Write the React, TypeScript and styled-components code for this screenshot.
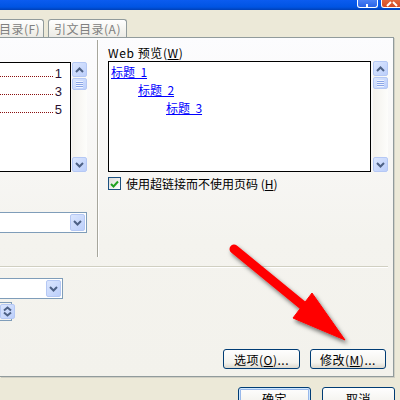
import React from 'react';
import styled, { createGlobalStyle } from 'styled-components';

const GlobalStyle = createGlobalStyle`
  body {
    margin: 0;
    font-family: "Noto Sans CJK SC", "Liberation Sans", sans-serif;
    font-size: 12px;
    color: #000;
  }
  * { box-sizing: border-box; }
`;

const Screen = styled.div`
  position: relative;
  width: 400px;
  height: 400px;
  overflow: hidden;
  background: #ece9d8;
  display: flex;
  flex-direction: column;
`;

const TitleBar = styled.div`
  height: 10px;
  flex-shrink: 0;
  background: linear-gradient(#0b5cf0, #0054e3 70%, #0041b8);
  display: flex;
  justify-content: flex-end;
  align-items: flex-start;
  gap: 3px;
`;

const CaptionButton = styled.div<{ $close?: boolean }>`
  width: 21px;
  height: 8px;
  margin-right: ${(p) => (p.$close ? '-2px' : '0')};
  border: 1px solid #fff;
  border-top: none;
  border-radius: 0 0 3px 3px;
  background: ${(p) => (p.$close ? 'linear-gradient(#e2673d, #d44a23)' : 'linear-gradient(#4b82f6, #2a63e6)')};
  display: flex;
  justify-content: center;
  align-items: flex-end;
`;

const TabRow = styled.div`
  display: flex;
  align-items: flex-end;
  gap: 4px;
  height: 18px;
  margin-top: 9px;
  flex-shrink: 0;
`;

const Tab = styled.div<{ $w: number; $shift?: number }>`
  width: ${(p) => p.$w}px;
  margin-left: ${(p) => p.$shift ?? 0}px;
  height: 18px;
  border: 1px solid #919b9c;
  border-bottom: none;
  border-radius: 3px 3px 0 0;
  background: linear-gradient(#fefefe, #f4f3ee 60%, #ecebe6);
  color: #808080;
  display: flex;
  align-items: center;
  justify-content: center;
  line-height: 1;
  white-space: nowrap;
  letter-spacing: 0.5px;
`;

const Panel = styled.div`
  width: 394px;
  height: 340px;
  flex-shrink: 0;
  border: 1px solid #919b9c;
  border-left: none;
  background: linear-gradient(#fcfcfe, #f4f3ee 60%, #f3f2ec);
  box-shadow: 1px 1px 0 #d0cfc4;
  display: flex;
  flex-direction: column;
`;

const TopSection = styled.div`
  height: 228px;
  display: flex;
`;

const LeftCol = styled.div`
  width: 97px;
  padding-top: 24px;
  display: flex;
  flex-direction: column;
`;

const ListFrame = styled.div`
  display: flex;
  gap: 1px;
  height: 110px;
`;

const ListBox = styled.div<{ $w: number }>`
  width: ${(p) => p.$w}px;
  height: 100%;
  background: #fff;
  border: 1px solid #000;
  padding-top: 1px;
`;

const LeftListBox = styled(ListBox)`
  border-left: none;
  padding-right: 8px;
`;

const LeaderRow = styled.div`
  height: 18px;
  display: flex;
  align-items: center;
  gap: 2px;
`;

const Leader = styled.span`
  flex: 1;
  height: 7px;
  border-bottom: 1px dotted #8a1010;
`;

const PageNum = styled.span`
  font-family: "Liberation Sans", sans-serif;
  font-size: 13px;
  color: #2a1030;
`;

const Scrollbar = styled.div`
  width: 15px;
  height: 100%;
  background: linear-gradient(90deg, #f3f1ec, #fdfdfb);
  display: flex;
  flex-direction: column;
  gap: 1px;
`;

const ScrollTrack = styled.div`
  flex: 1;
`;

const BlueButton = styled.div<{ $h?: number }>`
  width: 15px;
  height: ${(p) => p.$h ?? 15}px;
  border: 1px solid #b5c8f4;
  border-radius: 2px;
  background: linear-gradient(135deg, #dbe6fe, #bccffb);
  display: flex;
  align-items: center;
  justify-content: center;
  flex-shrink: 0;
`;

const Combo = styled.div<{ $w: number }>`
  width: ${(p) => p.$w}px;
  height: 21px;
  background: #fff;
  border: 1px solid #7f9db9;
  border-left: none;
  display: flex;
  justify-content: flex-end;
  align-items: center;
  padding-right: 1px;
`;

const LeftCombo = styled(Combo)`
  margin-top: 40px;
`;

const VSep = styled.div`
  width: 2px;
  height: 217px;
  margin-top: 2px;
  border-left: 1px solid #a7a69c;
  border-right: 1px solid #fff;
`;

const RightCol = styled.div`
  padding-left: 9px;
  display: flex;
  flex-direction: column;
`;

const Label = styled.div`
  margin-top: 7px;
  height: 15px;
  line-height: 15px;
  white-space: pre;
  letter-spacing: 0.6px;
`;

const PreviewFrame = styled.div`
  margin-top: 1px;
  display: flex;
  gap: 2px;
  height: 111px;
`;

const PreviewLink = styled.a<{ $indent: number }>`
  display: block;
  width: fit-content;
  height: 18px;
  line-height: 18px;
  margin-left: ${(p) => p.$indent}px;
  color: #0000ff;
  text-decoration: underline;
  white-space: pre;
`;

const CheckRow = styled.div`
  margin-top: 5px;
  display: flex;
  align-items: center;
  gap: 5px;
  height: 13px;
  white-space: nowrap;
`;

const CheckBox = styled.div`
  width: 13px;
  height: 13px;
  border: 1px solid #1c5180;
  background: linear-gradient(135deg, #dcdcd7, #fff);
  display: flex;
  align-items: center;
  justify-content: center;
`;

const HSep = styled.div`
  width: 388px;
  height: 2px;
  border-top: 1px solid #d0cfc1;
  border-bottom: 1px solid #fff;
`;

const BottomSection = styled.div`
  flex: 1;
  padding-top: 10px;
  display: flex;
  flex-direction: column;
`;

const Spinner = styled.div`
  width: 12px;
  height: 19px;
  margin-top: 3px;
  border: 1px solid #7f9db9;
  border-left: none;
  padding: 1px 1px 1px 0;
  display: flex;
`;

const ButtonRow = styled.div<{ $gap: number; $pr: number }>`
  display: flex;
  justify-content: flex-end;
  gap: ${(p) => p.$gap}px;
  padding-right: ${(p) => p.$pr}px;
`;

const PanelButtons = styled(ButtonRow)`
  margin-top: auto;
  margin-bottom: 7px;
`;

const FooterButtons = styled(ButtonRow)`
  margin-top: 10px;
`;

const XPButton = styled.div<{ $w: number; $default?: boolean }>`
  width: ${(p) => p.$w}px;
  height: ${(p) => (p.$default !== undefined ? 22 : 20)}px;
  border: 1px solid #003c74;
  border-radius: 3px;
  background: linear-gradient(#fefefe, #f4f3ee 70%, #dcd8ce);
  box-shadow: ${(p) => (p.$default ? 'inset 0 0 0 1px #cee7ff, inset 0 0 0 2px #98b8ea' : 'none')};
  display: flex;
  align-items: center;
  justify-content: center;
  white-space: nowrap;
  letter-spacing: 0.5px;
`;

const ArrowLayer = styled.svg`
  position: absolute;
  left: 0;
  top: 0;
  pointer-events: none;
`;

const Chevron = ({ up }: { up?: boolean }) => (
  <svg width="9" height="6" viewBox="0 0 9 6">
    <polyline
      points={up ? '1,5 4.5,1.5 8,5' : '1,1 4.5,4.5 8,1'}
      fill="none"
      stroke="#4d6185"
      strokeWidth="2"
    />
  </svg>
);

const Grip = () => (
  <svg width="7" height="7" viewBox="0 0 7 7">
    <g stroke="#eef3fe" strokeWidth="1">
      <line x1="0" y1="0.5" x2="7" y2="0.5" />
      <line x1="0" y1="2.5" x2="7" y2="2.5" />
      <line x1="0" y1="4.5" x2="7" y2="4.5" />
      <line x1="0" y1="6.5" x2="7" y2="6.5" />
    </g>
    <g stroke="#8aa5e6" strokeWidth="1">
      <line x1="0" y1="1.5" x2="7" y2="1.5" />
      <line x1="0" y1="3.5" x2="7" y2="3.5" />
      <line x1="0" y1="5.5" x2="7" y2="5.5" />
    </g>
  </svg>
);

const VScroll = () => (
  <Scrollbar>
    <BlueButton><Chevron up /></BlueButton>
    <BlueButton $h={12}><Grip /></BlueButton>
    <ScrollTrack />
    <BlueButton><Chevron /></BlueButton>
  </Scrollbar>
);

const App: React.FC = () => {
  return (
    <Screen>
      <GlobalStyle />
      <TitleBar>
        <CaptionButton>
          <svg width="3" height="3"><rect width="2" height="3" fill="#fff" /></svg>
        </CaptionButton>
        <CaptionButton $close>
          <svg width="12" height="6" viewBox="0 0 12 6">
            <path d="M1 5 L5 1 M7 1 L11 5" stroke="#fff" strokeWidth="2" />
          </svg>
        </CaptionButton>
      </TitleBar>

      <TabRow>
        <Tab $w={74} $shift={-30}>图表目录(F)</Tab>
        <Tab $w={79}>引文目录(A)</Tab>
      </TabRow>

      <Panel>
        <TopSection>
          <LeftCol>
            <ListFrame>
              <LeftListBox $w={71}>
                {['1', '3', '5'].map((n) => (
                  <LeaderRow key={n}>
                    <Leader />
                    <PageNum>{n}</PageNum>
                  </LeaderRow>
                ))}
              </LeftListBox>
              <VScroll />
            </ListFrame>
            <LeftCombo $w={87}>
              <BlueButton $h={17}><Chevron /></BlueButton>
            </LeftCombo>
          </LeftCol>

          <VSep />

          <RightCol>
            <Label>Web 预览(<u>W</u>)</Label>
            <PreviewFrame>
              <ListBox $w={263}>
                <PreviewLink $indent={2}>标题  1</PreviewLink>
                <PreviewLink $indent={29}>标题  2</PreviewLink>
                <PreviewLink $indent={57}>标题  3</PreviewLink>
              </ListBox>
              <VScroll />
            </PreviewFrame>
            <CheckRow>
              <CheckBox>
                <svg width="9" height="8" viewBox="0 0 9 8">
                  <polyline points="1,4 3.5,6.5 8,1.5" fill="none" stroke="#21a121" strokeWidth="2" />
                </svg>
              </CheckBox>
              <span>使用超链接而不使用页码 (<u>H</u>)</span>
            </CheckRow>
          </RightCol>
        </TopSection>

        <HSep />

        <BottomSection>
          <Combo $w={63}>
            <BlueButton $h={17}><Chevron /></BlueButton>
          </Combo>
          <Spinner>
            <BlueButton $h={15}>
              <svg width="9" height="11" viewBox="0 0 9 11">
                <polyline points="1,4.5 4.5,1.5 8,4.5" fill="none" stroke="#4d6185" strokeWidth="2" />
                <polyline points="1,6.5 4.5,9.5 8,6.5" fill="none" stroke="#4d6185" strokeWidth="2" />
              </svg>
            </BlueButton>
          </Spinner>
          <PanelButtons $gap={10} $pr={7}>
            <XPButton $w={77}>选项(<u>O</u>)...</XPButton>
            <XPButton $w={76}>修改(<u>M</u>)...</XPButton>
          </PanelButtons>
        </BottomSection>
      </Panel>

      <FooterButtons $gap={11} $pr={5}>
        <XPButton $w={73} $default>确定</XPButton>
        <XPButton $w={73} $default={false}>取消</XPButton>
      </FooterButtons>

      <ArrowLayer width="400" height="400" viewBox="0 0 400 400">
        <defs>
          <filter id="arrowShadow" x="-20%" y="-20%" width="140%" height="140%">
            <feDropShadow dx="2" dy="3" stdDeviation="2" floodColor="#000" floodOpacity="0.55" />
          </filter>
        </defs>
        <g filter="url(#arrowShadow)" fill="#ff0000" stroke="#ff0000">
          <line x1="234" y1="249" x2="306" y2="308" strokeWidth="9" strokeLinecap="round" />
          <polygon points="345,340 312,293 293,318" strokeWidth="1" strokeLinejoin="round" />
        </g>
      </ArrowLayer>
    </Screen>
  );
};

export default App;
